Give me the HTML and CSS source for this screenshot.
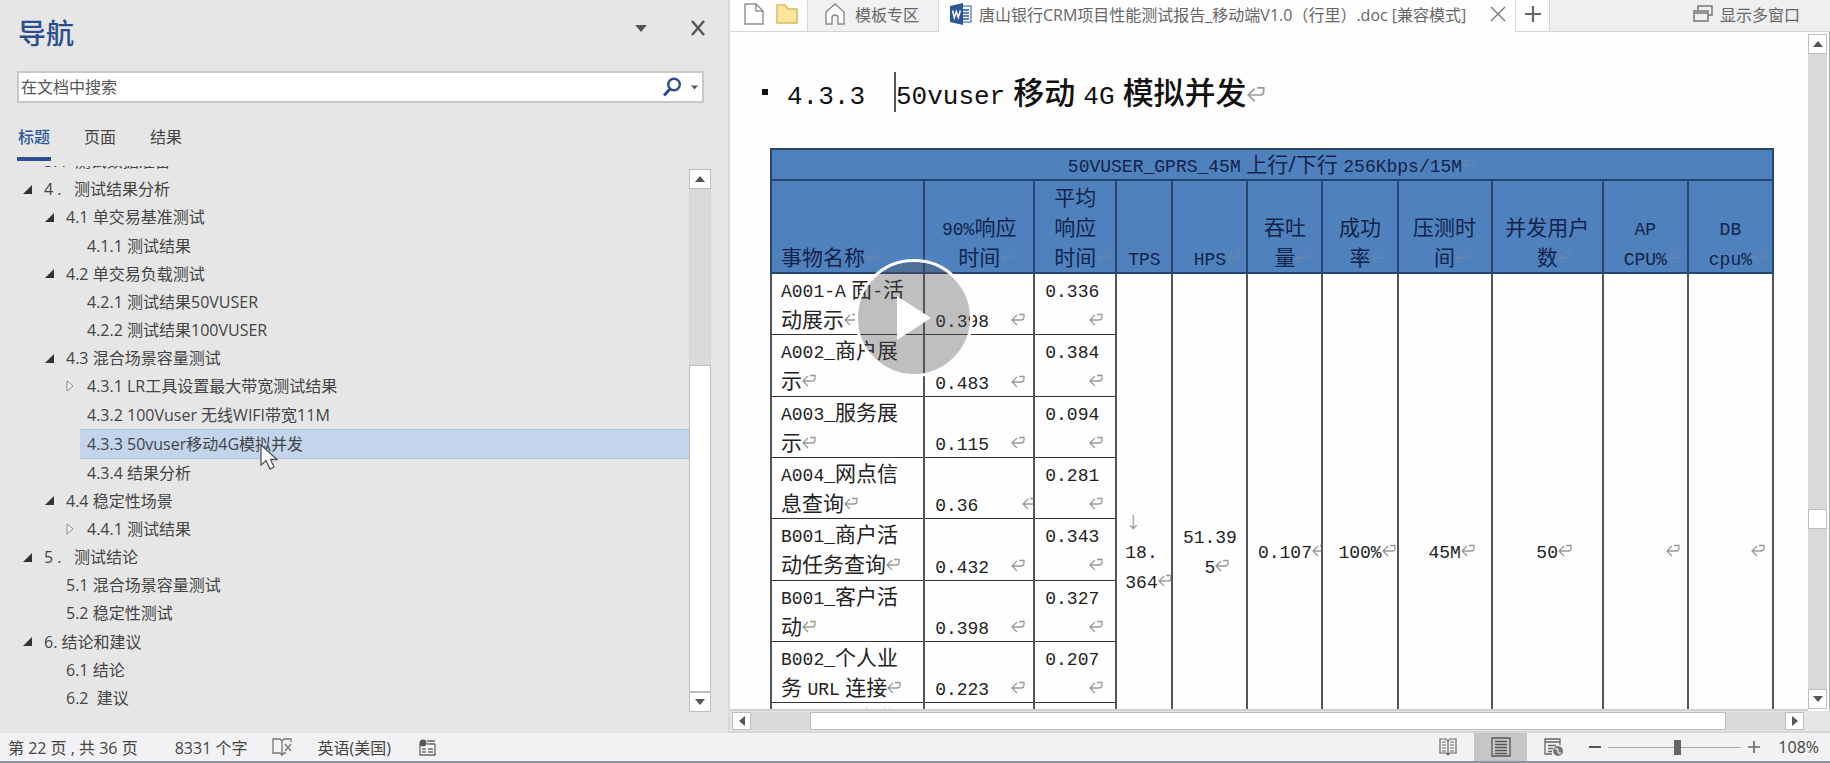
FILE: index.html
```html
<!DOCTYPE html>
<html lang="zh-CN">
<head>
<meta charset="utf-8">
<title>唐山银行CRM项目性能测试报告</title>
<link rel="stylesheet" href="styles.css">
</head>
<body>
<svg class="defs" aria-hidden="true">
  <symbol id="ret" viewBox="0 0 14 14"><path d="M6 2 L1 7 L6 12 M1 7 H10 Q13 7 13 4 V1.500 H8" fill="none" stroke="currentColor" stroke-width="1.300"/></symbol>
  <symbol id="up" viewBox="0 0 10 6"><path d="M5 0 L10 6 H0Z" fill="currentColor"/></symbol>
  <symbol id="down" viewBox="0 0 10 6"><path d="M0 0 H10 L5 6Z" fill="currentColor"/></symbol>
  <symbol id="open" viewBox="0 0 10 10"><path d="M10 0 V10 H0Z" fill="#333"/></symbol>
  <symbol id="closed" viewBox="0 0 8 12"><path d="M1 1 L7 6 L1 11Z" fill="#f4f4f4" stroke="#8a8a8a"/></symbol>
</svg>
<div class="app">
  <div class="main">
    <aside class="pane">
      <header class="pane-head">
        <h1>导航</h1>
        <button class="icon-btn" aria-label="选项"><svg class="tri" width="12" height="7"><use href="#down"/></svg></button>
        <button class="icon-btn" aria-label="关闭"><svg width="14" height="16" viewBox="0 0 14 16"><path d="M1 1 L13 15 M13 1 L1 15" stroke="#555" stroke-width="2.400"/></svg></button>
      </header>
      <div class="search">
        <input type="text" placeholder="在文档中搜索" aria-label="在文档中搜索">
        <button class="icon-btn" aria-label="搜索"><svg width="20" height="20" viewBox="0 0 20 20"><circle cx="12" cy="7.500" r="5.800" fill="none" stroke="#2b4f8e" stroke-width="2.400"/><path d="M8 12 L2 18.500" stroke="#2b4f8e" stroke-width="3.200"/></svg></button>
        <button class="icon-btn" aria-label="搜索选项"><svg class="tri" width="7" height="5"><use href="#down"/></svg></button>
      </div>
      <div class="tabs">
        <button class="tab on">标题</button><button class="tab">页面</button><button class="tab">结果</button>
      </div>
      <div class="tree-wrap">
        <ul class="tree">
          <li class="l1"><i></i><a href="#">3.4 &nbsp;测试数据准备</a></li>
          <li class="l1"><i><svg width="9" height="9"><use href="#open"/></svg></i><a href="#">4 .&nbsp;&nbsp; 测试结果分析</a></li>
          <li class="l2"><i><svg width="9" height="9"><use href="#open"/></svg></i><a href="#">4.1 单交易基准测试</a></li>
          <li class="l3"><i></i><a href="#">4.1.1 测试结果</a></li>
          <li class="l2"><i><svg width="9" height="9"><use href="#open"/></svg></i><a href="#">4.2 单交易负载测试</a></li>
          <li class="l3"><i></i><a href="#">4.2.1 测试结果50VUSER</a></li>
          <li class="l3"><i></i><a href="#">4.2.2 测试结果100VUSER</a></li>
          <li class="l2"><i><svg width="9" height="9"><use href="#open"/></svg></i><a href="#">4.3 混合场景容量测试</a></li>
          <li class="l3"><i><svg width="8" height="12"><use href="#closed"/></svg></i><a href="#">4.3.1 LR工具设置最大带宽测试结果</a></li>
          <li class="l3"><i></i><a href="#">4.3.2 100Vuser 无线WIFI带宽11M</a></li>
          <li class="l3 sel"><i></i><a href="#">4.3.3 50vuser移动4G模拟并发</a>
            <svg class="pointer" width="18" height="27" viewBox="0 0 18 27"><path d="M1 1 V21 L6 16.500 L10 25 L14 23 L10.500 15.500 H17Z" fill="#fff" stroke="#555" stroke-width="1.300"/></svg></li>
          <li class="l3"><i></i><a href="#">4.3.4 结果分析</a></li>
          <li class="l2"><i><svg width="9" height="9"><use href="#open"/></svg></i><a href="#">4.4 稳定性场景</a></li>
          <li class="l3"><i><svg width="8" height="12"><use href="#closed"/></svg></i><a href="#">4.4.1 测试结果</a></li>
          <li class="l1"><i><svg width="9" height="9"><use href="#open"/></svg></i><a href="#">5 .&nbsp;&nbsp; 测试结论</a></li>
          <li class="l2"><i></i><a href="#">5.1 混合场景容量测试</a></li>
          <li class="l2"><i></i><a href="#">5.2 稳定性测试</a></li>
          <li class="l1"><i><svg width="9" height="9"><use href="#open"/></svg></i><a href="#">6. 结论和建议</a></li>
          <li class="l2"><i></i><a href="#">6.1 结论</a></li>
          <li class="l2"><i></i><a href="#">6.2 &nbsp;建议</a></li>
        </ul>
        <div class="vbar nav-bar">
          <button aria-label="向上"><svg width="10" height="6"><use href="#up"/></svg></button>
          <div class="track"><div class="thumb"></div></div>
          <button aria-label="向下"><svg width="10" height="6"><use href="#down"/></svg></button>
        </div>
      </div>
    </aside>

    <section class="doc">
      <div class="doc-tabs">
        <div class="quick">
          <button class="icon-btn" aria-label="新建"><svg width="20" height="22" viewBox="0 0 20 22"><path d="M1 1 H12 L19 8 V21 H1Z M12 1 V8 H19" fill="#fff" stroke="#8f8f8f" stroke-width="1.400"/></svg></button>
          <button class="icon-btn" aria-label="打开"><svg width="22" height="20" viewBox="0 0 22 20"><path d="M1 19 V1 H9 L12 5 H21 V19Z" fill="#fbe49c" stroke="#d9b95c" stroke-width="1.400"/></svg></button>
        </div>
        <button class="doc-tab"><svg width="20" height="22" viewBox="0 0 20 22"><path d="M1 9 L10 1 L19 9 V21 H13 V15 Q13 12 10 12 Q7 12 7 15 V21 H1Z" fill="#fff" stroke="#8a8a8a" stroke-width="1.400"/></svg>模板专区</button>
        <div class="doc-tab active"><svg width="22" height="22" viewBox="0 0 22 22"><rect x="10" y="3" width="11" height="16" fill="#fff" stroke="#2b579a"/><path d="M13 7 H19 M13 10 H19 M13 13 H19 M13 16 H19" stroke="#2b579a" stroke-width="1.400"/><path d="M0 3 L13 0 V22 L0 19Z" fill="#2b579a"/><path d="M2.500 7.500 L4.300 14.500 L6.300 8.500 L8.300 14.500 L10.300 7.500" fill="none" stroke="#fff" stroke-width="1.500"/></svg><span>唐山银行CRM项目性能测试报告_移动端V1.0（行里）.doc [兼容模式]</span>
          <button class="icon-btn" aria-label="关闭文档"><svg width="16" height="16" viewBox="0 0 16 16"><path d="M1 1 L15 15 M15 1 L1 15" stroke="#777" stroke-width="1.400"/></svg></button></div>
        <button class="add" aria-label="新标签"><svg width="16" height="16" viewBox="0 0 16 16"><path d="M8 0 V16 M0 8 H16" stroke="#666" stroke-width="2.200"/></svg></button>
        <button class="multi"><svg width="20" height="17" viewBox="0 0 20 17"><path d="M5 6 V1 H19 V10 H15 M1 6 H15 V16 H1Z M1 8 H15" fill="none" stroke="#777" stroke-width="1.500"/></svg>显示多窗口</button>
      </div>
      <div class="doc-body">
        <div class="page">
          <h2><b class="bullet"></b><span class="num"><span class="n">4.3.3</span></span><span class="title"><span class="n">50vuser</span> <strong>移动</strong> <span class="n">4G</span> <strong>模拟并发</strong><svg class="ret"><use href="#ret"/></svg></span></h2>
          <table>
            <colgroup><col class="c153"><col class="c110"><col class="c82"><col class="c56"><col class="c75"><col class="c75"><col class="c75"><col class="c94"><col class="c111"><col class="c85"><col class="c85"></colgroup>
            <thead>
              <tr><th colspan="11"><span class="n">50VUSER_GPRS_45M</span> 上行/下行 <span class="n">256Kbps/15M</span><svg class="ret"><use href="#ret"/></svg></th></tr>
              <tr class="cols"><th class="left">事物名称<svg class="ret"><use href="#ret"/></svg></th><th><span class="n">90%</span>响应<br>时间<svg class="ret"><use href="#ret"/></svg></th><th>平均<br>响应<br>时间<svg class="ret"><use href="#ret"/></svg></th><th><span class="n">TPS</span></th><th><span class="n">HPS</span><svg class="ret"><use href="#ret"/></svg></th><th>吞吐<br>量<svg class="ret"><use href="#ret"/></svg></th><th>成功<br>率<svg class="ret"><use href="#ret"/></svg></th><th>压测时<br>间<svg class="ret"><use href="#ret"/></svg></th><th>并发用户<br>数<svg class="ret"><use href="#ret"/></svg></th><th><span class="n">AP</span><br><span class="n">CPU%</span><svg class="ret"><use href="#ret"/></svg></th><th><span class="n">DB</span><br><span class="n">cpu%</span><svg class="ret"><use href="#ret"/></svg></th></tr>
            </thead>
            <tbody>
              <tr><td><span class="n">A001-A</span> 面<span class="n">-</span>活<br>动展示<svg class="ret"><use href="#ret"/></svg></td><td class="low"><span class="n">0.398&nbsp;&nbsp;</span><svg class="ret"><use href="#ret"/></svg></td><td class="avg"><span class="n">0.336</span><span class="end"><svg class="ret"><use href="#ret"/></svg></span></td>
                <td class="mid tps" rowspan="9"><span class="arrow">↓</span><br><span class="n">18.</span><br><span class="n">364</span><svg class="ret"><use href="#ret"/></svg></td>
                <td class="mid" rowspan="9"><span class="n">51.39</span><br><span class="n">5</span><svg class="ret"><use href="#ret"/></svg></td>
                <td class="mid" rowspan="9"><span class="n">0.107</span><svg class="ret"><use href="#ret"/></svg></td>
                <td class="mid" rowspan="9"><span class="n">100%</span><svg class="ret"><use href="#ret"/></svg></td>
                <td class="mid" rowspan="9"><span class="n">45M</span><svg class="ret"><use href="#ret"/></svg></td>
                <td class="mid" rowspan="9"><span class="n">50</span><svg class="ret"><use href="#ret"/></svg></td>
                <td class="mid right" rowspan="9"><svg class="ret"><use href="#ret"/></svg></td>
                <td class="mid right" rowspan="9"><svg class="ret"><use href="#ret"/></svg></td></tr>
              <tr><td><span class="n">A002_</span>商户展<br>示<svg class="ret"><use href="#ret"/></svg></td><td class="low"><span class="n">0.483&nbsp;&nbsp;</span><svg class="ret"><use href="#ret"/></svg></td><td class="avg"><span class="n">0.384</span><span class="end"><svg class="ret"><use href="#ret"/></svg></span></td></tr>
              <tr><td><span class="n">A003_</span>服务展<br>示<svg class="ret"><use href="#ret"/></svg></td><td class="low"><span class="n">0.115&nbsp;&nbsp;</span><svg class="ret"><use href="#ret"/></svg></td><td class="avg"><span class="n">0.094</span><span class="end"><svg class="ret"><use href="#ret"/></svg></span></td></tr>
              <tr><td><span class="n">A004_</span>网点信<br>息查询<svg class="ret"><use href="#ret"/></svg></td><td class="low"><span class="n">0.36&nbsp;&nbsp;&nbsp;&nbsp;</span><svg class="ret"><use href="#ret"/></svg></td><td class="avg"><span class="n">0.281</span><span class="end"><svg class="ret"><use href="#ret"/></svg></span></td></tr>
              <tr><td><span class="n">B001_</span>商户活<br>动任务查询<svg class="ret"><use href="#ret"/></svg></td><td class="low"><span class="n">0.432&nbsp;&nbsp;</span><svg class="ret"><use href="#ret"/></svg></td><td class="avg"><span class="n">0.343</span><span class="end"><svg class="ret"><use href="#ret"/></svg></span></td></tr>
              <tr><td><span class="n">B001_</span>客户活<br>动<svg class="ret"><use href="#ret"/></svg></td><td class="low"><span class="n">0.398&nbsp;&nbsp;</span><svg class="ret"><use href="#ret"/></svg></td><td class="avg"><span class="n">0.327</span><span class="end"><svg class="ret"><use href="#ret"/></svg></span></td></tr>
              <tr><td><span class="n">B002_</span>个人业<br>务 <span class="n">URL</span> 连接<svg class="ret"><use href="#ret"/></svg></td><td class="low"><span class="n">0.223&nbsp;&nbsp;</span><svg class="ret"><use href="#ret"/></svg></td><td class="avg"><span class="n">0.207</span><span class="end"><svg class="ret"><use href="#ret"/></svg></span></td></tr>
              <tr><td><span class="n">B003_</span>个人业<br>&nbsp;</td><td></td><td></td></tr>
              <tr><td></td><td></td><td></td></tr>
            </tbody>
          </table>
        </div>
        <div class="vbar doc-bar">
          <button aria-label="向上"><svg width="10" height="6"><use href="#up"/></svg></button>
          <div class="track"><div class="thumb"></div></div>
          <button aria-label="向下"><svg width="10" height="6"><use href="#down"/></svg></button>
        </div>
      </div>
      <div class="hbar">
        <button aria-label="向左"><svg width="6" height="10" viewBox="0 0 6 10"><path d="M6 0 V10 L0 5Z" fill="#555"/></svg></button>
        <div class="track"><div class="thumb"></div></div>
        <button aria-label="向右"><svg width="6" height="10" viewBox="0 0 6 10"><path d="M0 0 V10 L6 5Z" fill="#555"/></svg></button>
      </div>
    </section>
  </div>

  <footer class="status">
    <span class="pages">第 22 页 , 共 36 页</span>
    <span>8331 个字</span>
    <svg width="20" height="18" viewBox="0 0 20 18"><path d="M10 3 L8 1 H1 V15 H8 L10 17Z M10 3 L12 1 H19 V4 M10 17 L12 15 H14 M13 6 L19 13 M19 6 L13 13" fill="none" stroke="#777" stroke-width="1.300"/></svg>
    <span>英语(美国)</span>
    <svg class="macro" width="17" height="17" viewBox="0 0 17 17"><path d="M1 5 V16 H16 V5" fill="#fff" stroke="#666" stroke-width="1.300"/><circle cx="4" cy="4" r="3.500" fill="#555"/><path d="M8 2 H16 M8 5 H16 M3 10 H7 M9 10 H14 M3 13 H7 M9 13 H14" stroke="#666" stroke-width="1.500"/></svg>
    <div class="views">
      <button aria-label="阅读视图"><svg width="18" height="18" viewBox="0 0 18 18"><path d="M9 3 L7 1 H1 V15 H7 L9 17 L11 15 H17 V1 H11Z V17 M3 4 H7 M3 7 H7 M3 10 H7 M3 13 H7 M11 4 H15 M11 7 H15 M11 10 H15 M11 13 H15" fill="none" stroke="#666" stroke-width="1.200"/></svg></button>
      <button class="on" aria-label="页面视图"><svg width="20" height="20" viewBox="0 0 20 20"><path d="M1 1 H19 V19 H1Z M4 4.500 H16 M4 7.500 H16 M4 10.500 H16 M4 13.500 H16 M4 16.500 H16" fill="none" stroke="#555" stroke-width="1.300"/></svg></button>
      <button aria-label="Web 视图"><svg width="20" height="19" viewBox="0 0 20 19"><path d="M8 16 H1 V1 H16 V7 M1 4 H16 M4 7.500 H12 M4 10.500 H9 M4 13.500 H8" fill="none" stroke="#666" stroke-width="1.300"/><circle cx="14" cy="13" r="5" fill="#777"/><path d="M11 11 Q14 10 14 13 T17 15" stroke="#eee" fill="none" stroke-width="1.300"/></svg></button>
    </div>
    <div class="zoom">
      <button class="icon-btn" aria-label="缩小"><svg width="12" height="12" viewBox="0 0 12 12"><path d="M0 6 H12" stroke="#555" stroke-width="2"/></svg></button>
      <input type="range" min="0" max="100" value="52" aria-label="缩放">
      <button class="icon-btn" aria-label="放大"><svg width="12" height="12" viewBox="0 0 12 12"><path d="M0 6 H12 M6 0 V12" stroke="#666" stroke-width="1.600"/></svg></button>
      <span>108%</span>
    </div>
  </footer>
  <button class="play" aria-label="播放"><svg width="34" height="44" viewBox="0 0 34 44"><path d="M0 0 L34 22 L0 44Z" fill="#fff"/></svg></button>
</div>
</body>
</html>
```
FILE: styles.css
```css
* { box-sizing: border-box; }
body {
  margin: 0;
  font-family: "Open Sans", "Noto Sans CJK SC", sans-serif;
  font-size: 16px;
  color: #444;
}
button { border: 0; background: none; padding: 0; margin: 0; font: inherit; color: inherit; }
h1, h2, ul { margin: 0; padding: 0; }
.defs { display: none; }
.app { position: relative; display: flex; flex-direction: column; height: 100vh; overflow: hidden; border-bottom: 2px solid #8f929c; }
.main { display: grid; grid-template-columns: 730fr 1100fr; flex: 1; min-height: 0; }
.icon-btn { display: flex; align-items: center; justify-content: center; }
.tri { color: #555; }

/* navigation pane */
.pane { display: flex; flex-direction: column; min-height: 0; padding-bottom: 21px; background: #e6e6e6; border-right: 2px solid #dad8dc; }
.pane-head { display: flex; align-items: flex-start; gap: 44px; padding: 14px 23px 0 18px; height: 71px; }
.pane-head h1 { flex: 1; font-size: 28px; line-height: 38px; font-weight: 500; color: #2b4f8e; }
.pane-head .icon-btn { height: 28px; }
.search { display: flex; align-items: center; gap: 9px; height: 32px; margin: 0 24px 0 17px; padding-right: 4px; background: #fff; border: 2px solid #c8c8cc; }
.search input { flex: 1; min-width: 0; border: 0; outline: 0; background: none; padding: 0 2px; font: inherit; color: #444; }
.search input::placeholder { color: #555; opacity: 1; }
.tabs { display: flex; gap: 32px; padding-left: 17px; margin-top: 18px; height: 40px; }
.tab { border-bottom: 4px solid transparent; padding: 0 1px 6px; }
.tab.on { color: #2b579a; font-weight: 500; border-color: #2b4f8e; }
.tree-wrap { flex: 1; min-height: 0; display: flex; margin-top: 5px; }
.tree { flex: 1; display: flex; flex-direction: column; justify-content: flex-end; list-style: none; overflow: hidden; }
.tree li { position: relative; display: flex; align-items: center; flex: 0 0 calc(98% / 19); line-height: 28px; white-space: nowrap; }
.tree i { display: flex; width: 21px; }
.tree a { color: inherit; text-decoration: none; }
.l1 { padding-left: 23px; }
.l2 { padding-left: 45px; }
.l3 { padding-left: 66px; }
.tree .sel { padding-left: 7px; margin-left: 80px; background: #c3d5ed; border: solid #b3c3e0; border-width: 1px 0; }
.sel i { display: none; }
.pointer { position: absolute; left: 180px; top: 14px; z-index: 1; }

/* scroll bars */
.vbar { display: flex; flex-direction: column; color: #555; }
.vbar button, .hbar button { flex: none; display: flex; align-items: center; justify-content: center; background: #fff; border: 1px solid #bdbdc0; }
.vbar button { height: 20px; }
.track { flex: 1; display: flex; min-height: 0; min-width: 0; background: #dad8db; }
.vbar .track { flex-direction: column; }
.thumb { background: #fff; border: 1px solid #bdbdc0; }
.nav-bar { width: 22px; margin: 3px 17px 0 0; }
.nav-bar .track { justify-content: flex-end; }
.nav-bar .thumb { height: 65%; }
.doc-bar { width: 22px; padding: 2px 2px 2px 0; border-right: 1px solid #aaa; }
.doc-bar .thumb { height: 20px; margin-top: 455px; }
.hbar { flex: none; display: flex; height: 22px; padding: 1px 26px 1px 2px; background: #e6e5e7; border-bottom: 2px solid #d4d4d6; }
.hbar button { width: 19px; }
.hbar .thumb { flex: 1; margin: 0 59px; }

/* document */
.doc { display: flex; flex-direction: column; min-width: 0; min-height: 0; background: #fefefe; }
.doc-tabs { display: flex; height: 32px; color: #666; }
.quick { display: flex; gap: 12px; padding: 0 9px 4px 14px; border-bottom: 1px solid #d5d5d5; }
.doc-tab { display: flex; align-items: center; gap: 10px; padding: 0 19px 4px 17px; background: #f1f0f2; border: solid #d5d5d5; border-width: 0 1px 1px; white-space: nowrap; }
.doc-tab.active { gap: 7px; padding: 0 9px 4px 11px; background: none; border: 0; }
.doc-tab.active .icon-btn { margin-left: 17px; }
.add { width: 35px; border: solid #d5d5d5; border-width: 0 1px 1px; padding-bottom: 4px; }
.add svg { display: block; margin: auto; }
.multi { flex: 1; display: flex; align-items: center; justify-content: flex-end; gap: 7px; padding: 0 30px 4px 0; background: #efeef1; border-bottom: 1px solid #d5d5d5; }
.doc-body { flex: 1; display: flex; min-height: 0; }
.page { flex: 1; min-width: 0; overflow: hidden; padding: 40px 34px 0 40px; border-bottom: 2px solid #d0d0d2; color: #222; }
h2 { display: flex; align-items: center; height: 40px; margin: 0 0 36px -8px; font-size: 31px; line-height: 40px; font-weight: 400; white-space: nowrap; color: #111; }
h2 strong { font-weight: 500; }
.bullet { width: 6px; height: 6px; margin-right: 19px; background: #111; }
.n { font-family: "Liberation Mono", monospace; font-size: 18px; line-height: 0; }
.num { width: 107px; }
h2 .n { font-size: 26px; }
.title { border-left: 2px solid #555; }
.ret { width: 14px; height: 14px; color: #999; }
h2 .ret { width: 18px; height: 18px; }
table { width: 100%; height: 678px; table-layout: fixed; border-collapse: collapse; font-size: 21px; line-height: 30px; }
.c153 { width: 153px; } .c110 { width: 110px; } .c82 { width: 82px; } .c56 { width: 56px; } .c75 { width: 75px; }
.c94 { width: 94px; } .c111 { width: 111px; } .c85 { width: 85px; }
th, td { padding: 0; border: 2px solid #55565a; white-space: nowrap; overflow: hidden; }
th { height: 31px; background: #4f81bd; border-color: #26466f; color: #13244c; font-weight: 400; line-height: 29px; text-align: center; vertical-align: bottom; }
.cols th { height: 93px; line-height: 30px; }
th .ret { color: #6686b0; }
.cols .ret, .mid .ret { margin-right: -14px; }
th.left { text-align: left; padding-left: 9px; }
tbody td { height: 61px; padding: 0 0 0 9px; border-width: 1px 2px; border-top-color: #333; border-bottom-color: #333; vertical-align: top; }
td.low { padding-left: 10px; vertical-align: bottom; }
td.avg { padding: 0 12px 0 10px; }
.end { display: block; text-align: right; }
td.mid { padding: 0; text-align: center; vertical-align: middle; }
td.tps { padding-left: 8px; text-align: left; }
td.right { padding-right: 21px; text-align: right; }
.arrow { color: #999; font-family: "Noto Sans CJK SC", sans-serif; font-size: 16px; line-height: 0; }

/* status bar */
.status { display: flex; align-items: center; gap: 25px; height: 28px; padding-left: 8px; background: #f2f1f3; white-space: nowrap; }
.pages { padding-right: 12px; }
.macro { margin-left: 3px; }
.views { display: flex; align-self: stretch; margin-left: auto; }
.views button { width: 53px; display: flex; align-items: center; justify-content: center; }
.views .on { background: #c6c5c8; }
.zoom { display: flex; align-items: center; gap: 7px; margin-left: -16px; padding-right: 11px; }
.zoom span { margin-left: 11px; }
.zoom input { appearance: none; width: 133px; height: 16px; margin: 0; background: linear-gradient(#aaa, #aaa) center / 100% 1px no-repeat; }
.zoom input::-webkit-slider-thumb { appearance: none; width: 7px; height: 15px; background: #666; }

/* video overlay */
.play { position: absolute; left: 50%; top: 318px; width: 118px; height: 118px; margin: -59px 0 0 -60px; display: flex; align-items: center; justify-content: center; border: 3px solid #fff; border-radius: 50%; background: rgba(80, 80, 80, 0.36); }
```
